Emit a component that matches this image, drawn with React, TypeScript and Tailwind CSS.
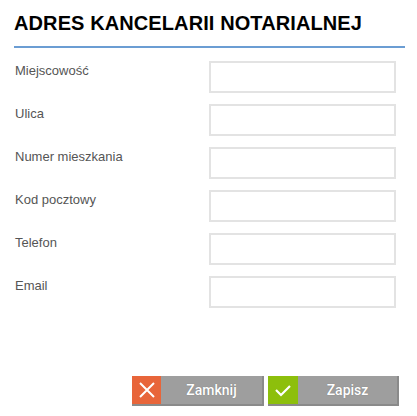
import React from 'react';

const fields = ['Miejscowość', 'Ulica', 'Numer mieszkania', 'Kod pocztowy', 'Telefon', 'Email'];

export default function App() {
  return (
    <div className="w-[417px] h-[416px] bg-white flex flex-col" style={{ fontFamily: '"Liberation Sans", Arial, sans-serif' }}>
      <div className="px-[14px] pt-[11px]">
        <h1 className="text-[20px] leading-[24px] font-bold text-black tracking-[0.1px]">ADRES KANCELARII NOTARIALNEJ</h1>
        <div className="mt-[11px] h-[2px] w-[391px] bg-[#6b9dd3]" />
      </div>

      <div className="flex flex-col gap-[11px] pt-[13px] pl-[15px]">
        {fields.map((f) => (
          <div key={f} className="flex items-start">
            <label className="w-[194px] text-[13px] leading-[15px] text-[#555] pt-[2px]">{f}</label>
            <input className="w-[187px] h-[32px] border-2 border-[#e3e3e3] bg-white outline-none" />
          </div>
        ))}
      </div>

      <div className="flex-1" />

      <div className="flex gap-[4px] pl-[132px] pb-[10px]" style={{ fontFamily: 'Roboto, "Liberation Sans", sans-serif' }}>
        <button className="flex h-[30px] w-[132px] bg-[#9e9e9e] border-r-2 border-b-2 border-[#8a8a8a]">
          <span className="w-[29px] h-full bg-[#e8653a] flex items-center justify-center">
            <svg width="18" height="18" viewBox="0 0 18 18" fill="none" stroke="white" strokeWidth="2">
              <path d="M2 2 L16 16 M16 2 L2 16" />
            </svg>
          </span>
          <span className="flex-1 h-full flex items-center justify-center text-white text-[14px] font-medium [text-shadow:0_0_1px_rgba(0,0,0,0.3)]">Zamknij</span>
        </button>
        <button className="flex h-[30px] w-[131px] bg-[#9e9e9e] border-r-2 border-b-2 border-[#8a8a8a]">
          <span className="w-[30px] h-full bg-[#8dbf0c] flex items-center justify-center">
            <svg width="18" height="14" viewBox="0 0 18 14" fill="none" stroke="white" strokeWidth="2.2">
              <path d="M2 7 L7 12 L16 3" />
            </svg>
          </span>
          <span className="flex-1 h-full flex items-center justify-center text-white text-[14px] font-medium [text-shadow:0_0_1px_rgba(0,0,0,0.3)]">Zapisz</span>
        </button>
      </div>
    </div>
  );
}
